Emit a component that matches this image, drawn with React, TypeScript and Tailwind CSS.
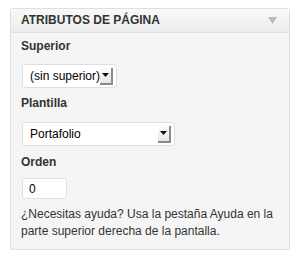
import { useState } from "react";

const Arrow = () => (
  <span className="flex h-[17px] w-[13px] items-center justify-center border-b-2 border-r-2 border-b-[#8a8a8a] border-r-[#8a8a8a] bg-gradient-to-b from-[#fdfdfd] to-[#e6e6e6]">
    <svg width="7" height="4" viewBox="0 0 7 4">
      <path d="M0 0h7L3.5 4z" fill="#111" />
    </svg>
  </span>
);

const FakeSelect = ({ value, width }: { value: string; width: string }) => (
  <div className={`ml-[1px] flex h-[24px] items-center justify-between rounded-[3px] border border-[#dfdfdf] bg-white pl-[7px] pr-[3px] ${width}`}>
    <span className="whitespace-nowrap text-[12px] text-black">{value}</span>
    <Arrow />
  </div>
);

export default function App() {
  const [orden, setOrden] = useState("0");

  return (
    <div className="h-[261px] w-[299px] bg-white pt-[8px] pl-[10px] font-['Liberation_Sans',Arial,sans-serif]">
      <div className="w-[280px] rounded-[3px] border border-[#dfdfdf] bg-[#f5f5f5]">
        <div className="flex h-[24px] items-center justify-between border-b border-[#dfdfdf] bg-gradient-to-b from-[#f9f9f9] to-[#ececec] pl-[10px] pr-[12px]">
          <h3 className="text-[12px] font-bold uppercase leading-[15px] text-[#333]">Atributos de página</h3>
          <svg width="9" height="7" viewBox="0 0 9 7">
            <path d="M0 0h9L4.5 7z" fill="#bbb" />
          </svg>
        </div>
        <div className="px-[10px] pb-[9px] pt-[6px] text-[12px] leading-[15px] text-[#333]">
          <p className="mb-[10px] font-bold">Superior</p>
          <FakeSelect value="(sin superior)" width="w-[95px]" />
          <p className="mb-[11px] mt-[8px] font-bold">Plantilla</p>
          <FakeSelect value="Portafolio" width="w-[153px]" />
          <p className="mb-[8px] mt-[9px] font-bold">Orden</p>
          <input
            value={orden}
            onChange={(e) => setOrden(e.target.value)}
            className="ml-[1px] block h-[21px] w-[45px] rounded-[3px] border border-[#dfdfdf] bg-white px-[6px] text-[12px] text-black outline-none"
          />
          <p className="mt-[7px] leading-[17px]">
            ¿Necesitas ayuda? Usa la pestaña Ayuda en la parte superior derecha de la pantalla.
          </p>
        </div>
      </div>
    </div>
  );
}
